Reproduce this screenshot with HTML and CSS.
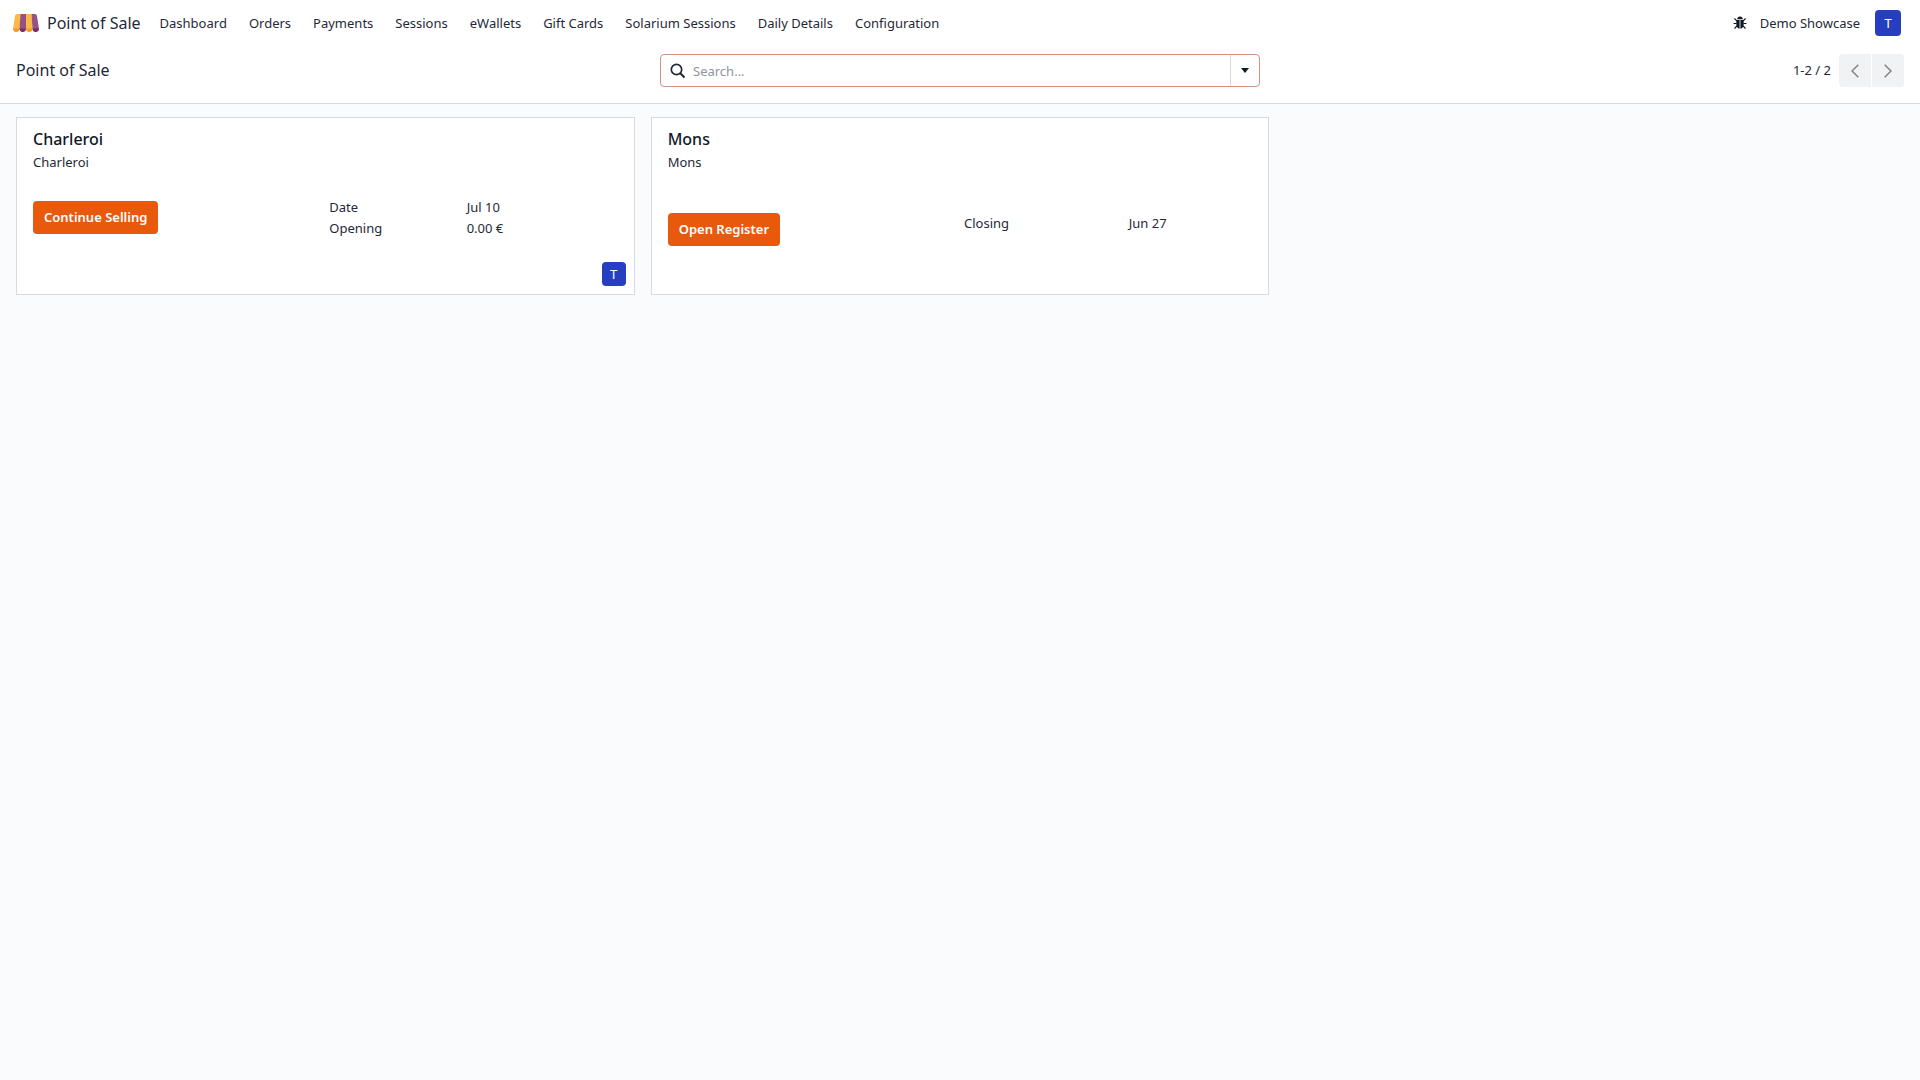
FILE: index.html
```html
<!DOCTYPE html>
<html lang="en">
<head>
<meta charset="utf-8">
<title>Point of Sale</title>
<meta name="viewport" content="width=device-width, initial-scale=1">
<link rel="stylesheet" href="styles.css">
</head>
<body>
<header class="navbar">
  <a class="brand" href="#">
    <svg class="brand-logo" viewBox="0 0 26 18" aria-hidden="true">
      <path fill="#fbb945" d="M4 0h4L6.500 15H0L2 2Q2.400 0 4 0z"/>
      <path fill="#985184" d="M7.500 0H13v15H6.500z"/>
      <path fill="#fbb945" d="M13 0h5.500l1 15H13z"/>
      <path fill="#985184" d="M18.500 0H22q1.600 0 2 2l2 13h-6.500z"/>
      <path fill="#f79a25" d="M0 14.500h6.500v.5a3.200 3 0 0 1-6.500 0zM13 14.500h6.500v.5a3.200 3 0 0 1-6.500 0z"/>
      <path fill="#7c2c64" d="M6.500 14.500H13v.5a3.200 3 0 0 1-6.500 0zM19.500 14.500H26v.5a3.200 3 0 0 1-6.500 0z"/>
    </svg>
    <span>Point of Sale</span>
  </a>
  <nav class="menu" aria-label="Main">
    <a href="#">Dashboard</a>
    <a href="#">Orders</a>
    <a href="#">Payments</a>
    <a href="#">Sessions</a>
    <a href="#">eWallets</a>
    <a href="#">Gift Cards</a>
    <a href="#">Solarium Sessions</a>
    <a href="#">Daily Details</a>
    <a href="#">Configuration</a>
  </nav>
  <div class="systray">
    <button class="icon-button" type="button" aria-label="Developer tools">
      <svg class="bug" viewBox="0 0 14 14" aria-hidden="true">
        <path fill="currentColor" d="M4.300 3.300a2.700 2.700 0 0 1 5.400 0zM3.300 4h3.300v8.700C4.500 12.600 3.300 10.800 3.300 8zM7.400 4h3.300v4c0 2.800-1.200 4.600-3.300 4.700z"/>
        <path fill="none" stroke="currentColor" stroke-width="1.200" d="M1.500 2.500l2.300 2.300M12.500 2.500l-2.300 2.300M.5 7.500h3M10.500 7.500h3M1.500 12.500l2.500-2.600M12.500 12.500L10 9.900"/>
      </svg>
    </button>
    <span class="company">Demo Showcase</span>
    <button class="avatar avatar-user" type="button" aria-label="User menu">T</button>
  </div>
</header>

<section class="control-panel">
  <h1 class="page-title">Point of Sale</h1>
  <form class="search" role="search">
    <svg class="search-icon" viewBox="0 0 16 16" aria-hidden="true">
      <circle cx="6.500" cy="6.500" r="5.200" fill="none" stroke="currentColor" stroke-width="1.700"/>
      <path d="M10.300 10.300l4.200 4.200" fill="none" stroke="currentColor" stroke-width="2"/>
    </svg>
    <input class="search-input" type="search" placeholder="Search..." aria-label="Search">
    <button class="search-toggle" type="button" aria-label="Search options">
      <svg class="caret" viewBox="0 0 8 5" aria-hidden="true"><path fill="currentColor" d="M0 0h8L4 5z"/></svg>
    </button>
  </form>
  <div class="pager">
    <span>1-2 / 2</span>
    <div class="pager-buttons">
      <button type="button" aria-label="Previous">
        <svg class="chevron" viewBox="0 0 8 14" aria-hidden="true"><path d="M7.300.7L1 7l6.300 6.300"/></svg>
      </button>
      <button type="button" aria-label="Next">
        <svg class="chevron" viewBox="0 0 8 14" aria-hidden="true"><path d="M.7.700L7 7 .7 13.300"/></svg>
      </button>
    </div>
  </div>
</section>

<main class="board">
  <article class="card">
    <h2 class="card-title">Charleroi</h2>
    <p class="card-subtitle">Charleroi</p>
    <div class="card-body">
      <div class="card-action"><button class="primary" type="button">Continue Selling</button></div>
      <dl class="facts facts-open">
        <dt>Date</dt><dd>Jul 10</dd>
        <dt>Opening</dt><dd>0.00 €</dd>
      </dl>
    </div>
    <span class="avatar avatar-small card-user">T</span>
  </article>
  <article class="card card-closed">
    <h2 class="card-title">Mons</h2>
    <p class="card-subtitle">Mons</p>
    <div class="card-body">
      <div class="card-action"><button class="primary" type="button">Open Register</button></div>
      <dl class="facts facts-closed">
        <dt>Closing</dt><dd>Jun 27</dd>
      </dl>
    </div>
  </article>
</main>
</body>
</html>
```

FILE: styles.css
```css
* {
  box-sizing: border-box;
}

body {
  margin: 0;
  min-height: 100vh;
  background: #f9fbfd;
  color: #1f2937;
  font-family: "Noto Sans", "Open Sans", sans-serif;
  font-size: 13px;
  line-height: 21px;
}

button,
input {
  margin: 0;
  padding: 0;
  border: 0;
  background: none;
  color: inherit;
  font: inherit;
}

a {
  color: inherit;
  text-decoration: none;
}

h1,
h2,
p,
dl,
dd {
  margin: 0;
}

.navbar {
  display: flex;
  align-items: center;
  height: 46px;
  padding: 0 19px 0 13px;
  background: #fff;
}

.brand {
  display: flex;
  align-items: center;
  gap: 8px;
  font-size: 16px;
}

.brand-logo {
  width: 26px;
  height: 18px;
}

.menu {
  display: flex;
  gap: 22px;
  margin-left: 19px;
}

.systray {
  display: flex;
  align-items: center;
  margin-left: auto;
}

.icon-button {
  display: flex;
  margin-right: 13px;
}

.bug {
  width: 14px;
  height: 14px;
  color: #111827;
}

.company {
  margin-right: 15px;
}

.avatar {
  display: flex;
  align-items: center;
  justify-content: center;
  border-radius: 4px;
  background: #263fc0;
  color: #fff;
}

.avatar-user {
  width: 26px;
  height: 26px;
}

.avatar-small {
  width: 24px;
  height: 24px;
}

.control-panel {
  display: grid;
  grid-template-columns: 1fr 600px 1fr;
  align-items: center;
  padding: 8px 16px 16px;
  border-bottom: 1px solid #d8dadd;
  background: #fff;
}

.page-title {
  font-size: 16px;
  font-weight: 400;
}

.search {
  display: flex;
  align-items: center;
  height: 33px;
  border: 1px solid #d0917f;
  border-radius: 4px;
}

.search-icon {
  flex: none;
  width: 16px;
  height: 16px;
  margin: 0 7px 0 9px;
  color: #1f2937;
}

.search-input {
  flex: 1;
  min-width: 0;
  height: 100%;
  outline: 0;
}

.search-input::placeholder {
  color: #8f949c;
}

.search-toggle {
  display: flex;
  align-items: center;
  justify-content: center;
  align-self: stretch;
  width: 29px;
  border-left: 1px solid #d8dadd;
}

.caret {
  width: 8px;
  height: 5px;
  color: #111827;
}

.pager {
  display: flex;
  align-items: center;
  justify-content: flex-end;
  gap: 8px;
}

.pager-buttons {
  display: flex;
  gap: 1px;
}

.pager-buttons button {
  display: flex;
  align-items: center;
  justify-content: center;
  width: 32px;
  height: 33px;
  border-radius: 4px 0 0 4px;
  background: #f1f2f4;
}

.pager-buttons button:last-child {
  border-radius: 0 4px 4px 0;
}

.chevron {
  width: 8px;
  height: 14px;
  fill: none;
  stroke: #7b7f86;
  stroke-width: 1.4px;
}

.board {
  display: grid;
  grid-template-columns: repeat(3, 1fr);
  gap: 16px;
  padding: 13px 16px;
}

.card {
  display: flex;
  flex-direction: column;
  min-height: 178px;
  padding: 9px 8px 8px;
  border: 1px solid #d8dadd;
  background: #fff;
}

.card-title,
.card-subtitle,
.card-body {
  margin-left: 8px;
  margin-right: 8px;
}

.card-title {
  color: #111827;
  font-size: 16px;
  font-weight: 500;
  line-height: 25px;
}

.card-body {
  display: grid;
  grid-template-columns: 1fr 1fr;
  gap: 8px;
  margin-top: 24px;
}

.card-action {
  padding-top: 4px;
}

.card-closed .card-body {
  margin-top: 40px;
}

.card-closed .card-action {
  padding-top: 0;
}

.primary {
  height: 33px;
  padding: 0 11px;
  border-radius: 4px;
  background: #e8590c;
  color: #fff;
  font-weight: 600;
}

.facts {
  display: grid;
  align-content: start;
}

.facts-open {
  grid-template-columns: 10fr 11fr;
}

.facts-closed {
  grid-template-columns: 4fr 3fr;
}

.card-user {
  align-self: flex-end;
  margin-top: auto;
}
```
